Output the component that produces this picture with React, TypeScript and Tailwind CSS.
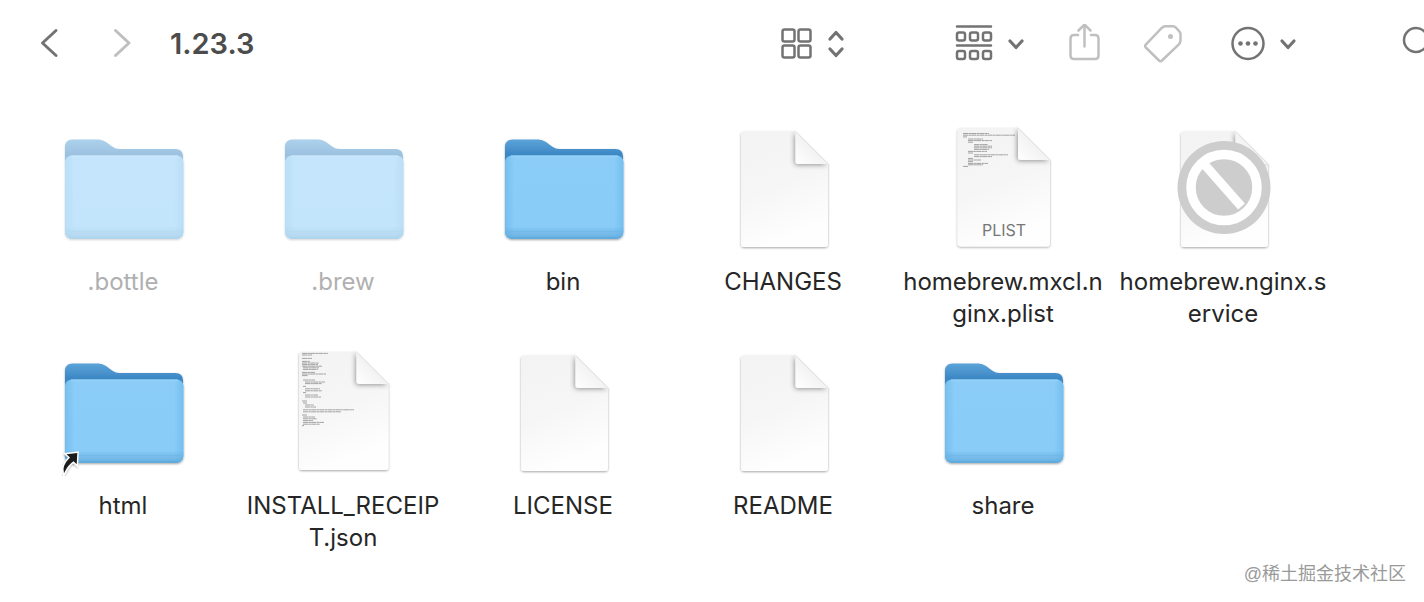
import type { ReactNode } from 'react';

type IconKind = 'folder' | 'alias' | 'page' | 'plist' | 'json' | 'blocked';

interface FileEntry {
  id: string;
  label: string;
  icon: IconKind;
  hidden?: boolean;
}

// Long names carry the line break Finder puts in them.
const files: FileEntry[] = [
  { id: 'bottle', label: '.bottle', icon: 'folder', hidden: true },
  { id: 'brew', label: '.brew', icon: 'folder', hidden: true },
  { id: 'bin', label: 'bin', icon: 'folder' },
  { id: 'changes', label: 'CHANGES', icon: 'page' },
  { id: 'plist', label: 'homebrew.mxcl.n\nginx.plist', icon: 'plist' },
  { id: 'service', label: 'homebrew.nginx.s\nervice', icon: 'blocked' },
  { id: 'html', label: 'html', icon: 'alias' },
  { id: 'receipt', label: 'INSTALL_RECEIP\nT.json', icon: 'json' },
  { id: 'license', label: 'LICENSE', icon: 'page' },
  { id: 'readme', label: 'README', icon: 'page' },
  { id: 'share', label: 'share', icon: 'folder' }
];

// x, y, width of every preview line
const plistLines = [
  [23, 9.5, 26], [23, 11.2, 52], [23, 12.9, 4], [28, 15, 15], [28, 16.6, 24], [28, 18.2, 5],
  [34, 20.6, 14], [34, 22.2, 18], [34, 23.8, 18], [34, 25.4, 15], [28, 27.4, 19], [28, 29, 5],
  [34, 30.8, 34], [34, 32.6, 18], [28, 34.4, 5], [28, 36, 13], [28, 37.6, 5], [28, 39.4, 20],
  [28, 40.8, 15], [23, 42.4, 5]
];

const jsonLines = [
  [22, 5.4, 26], [22, 7, 10], [22, 10.4, 10], [22, 13.4, 8], [22, 15, 17], [22, 16.6, 16],
  [22, 18.2, 20], [23, 19.8, 16], [23, 21.4, 15], [22, 24.4, 13], [22, 26, 24], [22, 27.6, 6],
  [23, 32, 12], [25, 34, 20], [25, 35.6, 17], [23, 38.4, 3], [25, 40.8, 15], [25, 42.8, 17],
  [23, 44.6, 3], [25, 47, 13], [25, 49, 16], [22, 53, 5], [23, 55, 4], [25, 57, 9], [25, 59, 11],
  [23, 61.8, 51], [23, 63.8, 38], [22, 67, 5], [23, 69, 12], [23, 70.8, 14], [23, 72.6, 10],
  [23, 74.4, 21], [23, 76.2, 17], [22, 77.6, 2]
];

const IconDefs = () => (
  <svg className="absolute h-0 w-0" aria-hidden="true">
    <defs>
      <linearGradient id="folderBack" x1="0" y1="0" x2="0" y2="1">
        <stop offset="0" stopColor="#5ca4d9" />
        <stop offset="0.15" stopColor="#3c87c4" />
        <stop offset="1" stopColor="#3c87c4" />
      </linearGradient>
      <linearGradient id="folderFront" x1="0" y1="0" x2="0" y2="1">
        <stop offset="0" stopColor="#8bcdf8" />
        <stop offset="0.85" stopColor="#89ccf8" />
        <stop offset="0.9" stopColor="#7bc0ee" />
        <stop offset="0.95" stopColor="#74b9e8" />
        <stop offset="1" stopColor="#5ba8dc" />
      </linearGradient>
      <linearGradient id="folderSides" x1="0" y1="0" x2="1" y2="0">
        <stop offset="0" stopColor="#5aaee3" stopOpacity="0.45" />
        <stop offset="0.08" stopColor="#5aaee3" stopOpacity="0" />
        <stop offset="0.92" stopColor="#5aaee3" stopOpacity="0" />
        <stop offset="1" stopColor="#5aaee3" stopOpacity="0.45" />
      </linearGradient>
      <linearGradient id="paper" x1="0" y1="0" x2="0.3" y2="1">
        <stop offset="0" stopColor="#f3f3f3" />
        <stop offset="0.55" stopColor="#f6f6f6" />
        <stop offset="1" stopColor="#fefefe" />
      </linearGradient>
      <linearGradient id="paperFold" x1="0" y1="1" x2="0.6" y2="0.4">
        <stop offset="0" stopColor="#ffffff" />
        <stop offset="1" stopColor="#f0f0f0" />
      </linearGradient>
      <filter id="dropShadow" x="-10%" y="-10%" width="120%" height="120%">
        <feDropShadow dx="0" dy="1" stdDeviation="1" floodColor="#000" floodOpacity="0.35" />
      </filter>
      <filter id="foldShadow" x="-40%" y="-40%" width="180%" height="180%">
        <feDropShadow dx="-1" dy="1" stdDeviation="2.500" floodColor="#000" floodOpacity="0.4" />
      </filter>
    </defs>
  </svg>
);

const FolderArt = ({ alias }: { alias?: boolean }) => (
  <>
    <g filter="url(#dropShadow)">
      <path
        d="M5 23q0-7.500 7.500-7.500h26q4 0 7.500 2.500l6 4.500q3.500 2.500 7.500 2.500h56q7.500 0 7.500 7.500v72q0 10-7.500 10H12.500q-7.500 0-7.500-7.500z"
        fill="url(#folderBack)"
      />
      <rect x="5" y="31.500" width="118.500" height="83.500" rx="7" fill="url(#folderFront)" />
      <rect x="5" y="31.500" width="118.500" height="83.500" rx="7" fill="url(#folderSides)" />
    </g>
    <path d="M7 107.500h114.500" stroke="#69b5e8" strokeWidth="0.6" />
    <path d="M11 32h107" stroke="#a5d9fa" strokeWidth="0.8" />
    {alias ? (
      <path
        d="M6.500 106.200l10.800-1.200-0.600 11.300-3.200-3q-5.800 3.800-9.500 12-2.500-7.500 6-15.800z"
        fill="#1c1c1c"
        stroke="#fff"
        strokeWidth="3"
        strokeLinejoin="miter"
        paintOrder="stroke"
        filter="url(#dropShadow)"
      />
    ) : null}
  </>
);

interface PaperArtProps {
  x: number;
  y: number;
  width: number;
  height: number;
  fold: number;
  lines?: number[][];
  children?: ReactNode;
}

const PaperArt = ({ x, y, width, height, fold, lines = [], children }: PaperArtProps) => {
  const right = x + width;
  const bottom = y + height;
  const foldX = right - fold;
  const foldY = y + fold;
  const outline = `M${x + 3} ${y}H${foldX}L${right} ${foldY}V${bottom - 3}q0 3-3 3H${x + 3}q-3 0-3-3V${y + 3}q0-3 3-3z`;

  return (
    <>
      <path d={outline} fill="url(#paper)" filter="url(#dropShadow)" />
      {lines.map(([lineX, lineY, lineWidth]) => (
        <path
          key={lineY}
          d={`M${lineX} ${lineY}h${lineWidth}`}
          stroke="#9a9a9a"
          strokeWidth="0.9"
          strokeDasharray="5 0.4 2.500 0.300"
        />
      ))}
      <path
        d={`M${foldX} ${y}L${right} ${foldY}H${foldX + 3}q-3 0-3-3z`}
        fill="url(#paperFold)"
        filter="url(#foldShadow)"
      />
      <path d={`M${foldX + 1} ${y - 5}V${y}L${right} ${foldY - 1}H${right + 5}V${y - 5}z`} fill="#fff" />
      <path d={`M${foldX} ${y}L${right} ${foldY}`} stroke="#dedede" strokeWidth="0.8" />
      {children}
    </>
  );
};

const PlainPaper = () => <PaperArt x={21} y={7.5} width={87} height={115.5} fold={32.5} />;

const FileArt = ({ kind }: { kind: IconKind }) => {
  switch (kind) {
    case 'folder':
      return <FolderArt />;
    case 'alias':
      return <FolderArt alias />;
    case 'plist':
      return (
        <PaperArt x={17.5} y={4} width={92.5} height={118.5} fold={32} lines={plistLines}>
          <text
            x="64"
            y="112"
            textAnchor="middle"
            fontSize="16"
            fill="#777777"
            fontFamily="Inter, sans-serif"
          >
            PLIST
          </text>
        </PaperArt>
      );
    case 'json':
      return <PaperArt x={19} y={4} width={89.5} height={118} fold={32} lines={jsonLines} />;
    case 'blocked':
      return (
        <>
          <PlainPaper />
          <circle cx="64" cy="63.500" r="46.500" fill="#cdcdcd" />
          <circle cx="64" cy="63.500" r="33" fill="none" stroke="#fff" strokeWidth="9.500" />
          <path d="M44.500 40.500l37 42" stroke="#fff" strokeWidth="9" />
        </>
      );
    default:
      return <PlainPaper />;
  }
};

const FileItem = ({ file }: { file: FileEntry }) => (
  <li>
    <button type="button" className="flex w-full flex-col items-center gap-3.5">
      <svg
        viewBox="-1 0 128 128"
        className={`h-32 w-32 overflow-visible ${file.hidden ? 'opacity-50' : ''}`}
        aria-hidden="true"
      >
        <FileArt kind={file.icon} />
      </svg>
      <span
        className={`text-center text-2xl leading-8 whitespace-pre-line ${
          file.hidden ? 'text-[#b0b0b0]' : 'text-[#262626]'
        }`}
      >
        {file.label}
      </span>
    </button>
  </li>
);

interface ToolButtonProps {
  label: string;
  className: string;
  viewBox: string;
  children: ReactNode;
}

const ToolButton = ({ label, className, viewBox, children }: ToolButtonProps) => (
  <button type="button" aria-label={label} className="shrink-0">
    <svg
      viewBox={viewBox}
      className={`h-10 ${className}`}
      fill="none"
      stroke="currentColor"
      strokeWidth="2.500"
      strokeLinecap="round"
      strokeLinejoin="round"
      aria-hidden="true"
    >
      {children}
    </svg>
  </button>
);

const Toolbar = () => (
  <header className="flex h-[88px] items-center overflow-hidden pl-10 text-[#737373]">
    <nav className="flex gap-[52px]">
      <ToolButton label="Back" className="w-5" viewBox="0 0 20 40">
        <path d="M16 6.500L2.500 19l13.500 12.500" strokeWidth="3" />
      </ToolButton>
      <ToolButton label="Forward" className="w-5 text-[#bfbfbf]" viewBox="0 0 20 40">
        <path d="M3.500 6.500L17 19l-13.500 12.500" strokeWidth="3" />
      </ToolButton>
    </nav>
    <h1 className="ml-[38px] flex-1 text-[29px] leading-10 font-semibold text-[#4c4c4c]">1.23.3</h1>

    <ToolButton label="View as icons" className="w-16" viewBox="0 0 64 40">
      <rect x="1.500" y="5.500" width="12" height="12" rx="2" />
      <rect x="17.500" y="5.500" width="12" height="12" rx="2" />
      <rect x="1.500" y="21.500" width="12" height="12" rx="2" />
      <rect x="17.500" y="21.500" width="12" height="12" rx="2" />
      <path d="M49 15l6-6.500 6 6.500M49 25l6 6.500 6-6.500" strokeWidth="3.200" />
    </ToolButton>

    <div className="ml-[110px] flex items-center gap-[43px]">
      <ToolButton label="Group items" className="w-[70px]" viewBox="0 0 70 40">
        <path d="M2 2.500h34M2 21.500h34" />
        <rect x="2" y="8.500" width="8" height="8" rx="2" />
        <rect x="15" y="8.500" width="8" height="8" rx="2" />
        <rect x="28" y="8.500" width="8" height="8" rx="2" />
        <rect x="2" y="27" width="8" height="8" rx="2" />
        <rect x="15" y="27" width="8" height="8" rx="2" />
        <rect x="28" y="27" width="8" height="8" rx="2" />
        <path d="M55 17l6 6.500 6-6.500" strokeWidth="3.200" />
      </ToolButton>
      <ToolButton label="Share" className="w-8 text-[#c0c0c0]" viewBox="0 0 32 40">
        <path d="M10 11H6q-3.500 0-3.500 3.500v17q0 3.500 3.500 3.500h21q3.500 0 3.500-3.500v-17q0-3.500-3.500-3.500H23" />
        <path d="M16.500 22.500V1M10.500 6.500L16.500 0.500l6 6" />
      </ToolButton>
      <ToolButton label="Edit tags" className="w-10 text-[#c0c0c0]" viewBox="0 0 40 40">
        <path d="M2.800 20.700L18.500 4.200q1.800-1.900 4-1.900h7.500q1.600 0 2.800 1.200l3.500 3.800q1.200 1.200 1.200 2.800v6.400q0 2.200-1.600 3.800L19 36.500q-1.500 1.500-3 0L2.800 23.500q-1.400-1.400 0-2.800z" />
        <circle cx="27.500" cy="12.500" r="2.500" fill="currentColor" stroke="none" />
      </ToolButton>
      <ToolButton label="More actions" className="ml-1 w-[68px]" viewBox="0 0 68 40">
        <circle cx="18" cy="19.500" r="15.500" />
        <g fill="currentColor" stroke="none">
          <circle cx="10.500" cy="19.500" r="2.300" />
          <circle cx="18" cy="19.500" r="2.300" />
          <circle cx="25.500" cy="19.500" r="2.300" />
        </g>
        <path d="M52 17l6 6.500 6-6.500" strokeWidth="3.200" />
      </ToolButton>
    </div>

    {/* runs past the window's right edge */}
    <div className="-mr-4 ml-[102px] flex">
      <ToolButton label="Search" className="w-10" viewBox="0 0 40 40">
        <circle cx="16" cy="16" r="12" />
        <path d="M25 25l9 9" />
      </ToolButton>
    </div>
  </header>
);

export default function App() {
  return (
    <div className="min-h-screen bg-white font-['Inter',sans-serif]">
      <IconDefs />
      <Toolbar />
      <main className="pt-9 pl-[13px]">
        <ul className="grid grid-cols-[repeat(auto-fill,220px)] gap-y-[18px]">
          {files.map((file) => (
            <FileItem key={file.id} file={file} />
          ))}
        </ul>
      </main>
      <footer className="pt-1.5 pr-[18px] text-right font-['Liberation_Sans','Noto_Sans_CJK_SC',sans-serif] text-lg leading-7 text-[#9a9a9a]">
        @稀土掘金技术社区
      </footer>
    </div>
  );
}
